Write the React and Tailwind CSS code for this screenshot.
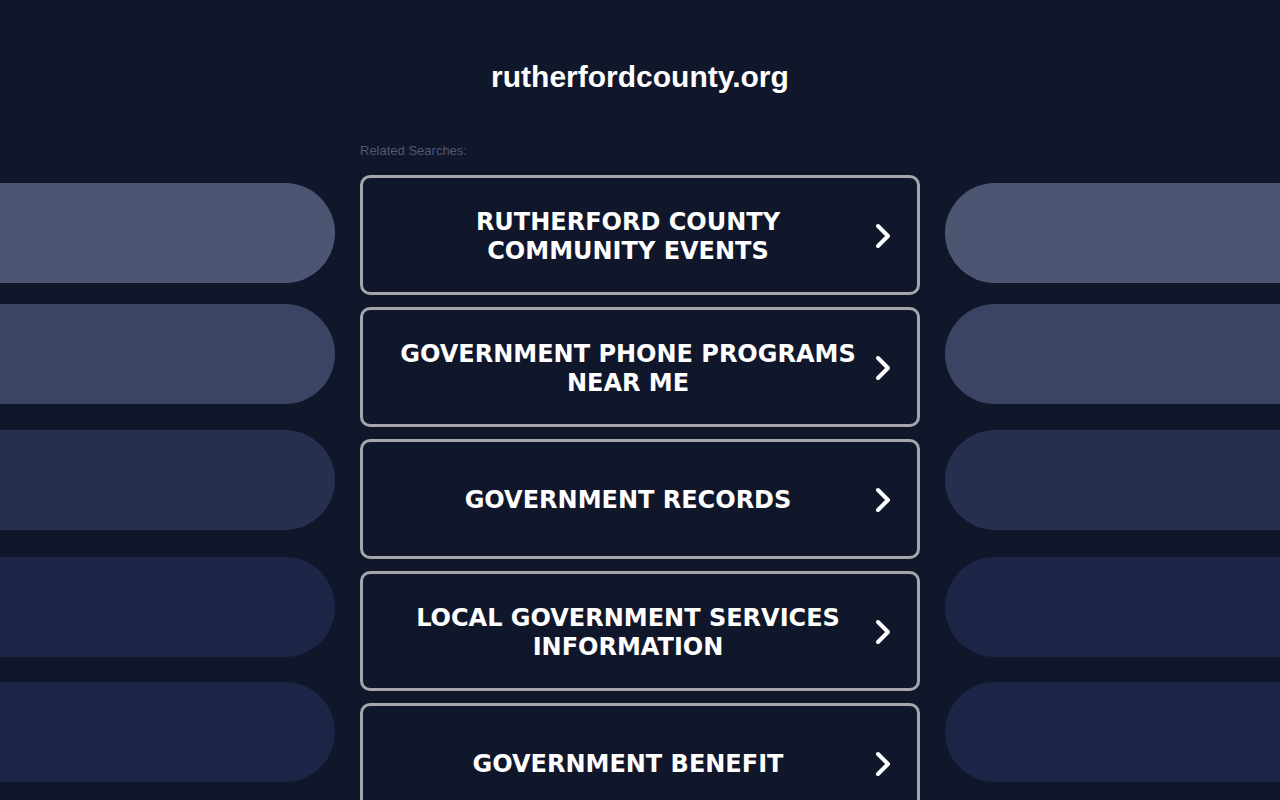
const searches = [
  ["RUTHERFORD COUNTY", "COMMUNITY EVENTS"],
  ["GOVERNMENT PHONE PROGRAMS", "NEAR ME"],
  ["GOVERNMENT RECORDS"],
  ["LOCAL GOVERNMENT SERVICES", "INFORMATION"],
  ["GOVERNMENT BENEFIT"],
];

// side pills, top to bottom
const pills = [
  "bg-[#4c5673] mt-[183px]",
  "bg-[#3b4462] mt-[21px]",
  "bg-[#272f4e] mt-[26px]",
  "bg-[#1d2647] mt-[27px]",
  "bg-[#1c2546] mt-[25px]",
];

function Chevron() {
  return (
    <svg width="20" height="28" viewBox="0 0 20 28" fill="none">
      <path d="M5 4 L15 14 L5 24" stroke="white" strokeWidth="4" strokeLinecap="round" strokeLinejoin="round" />
    </svg>
  );
}

function App() {
  return (
    <div className="h-[800px] overflow-hidden bg-[#11172b] font-['Liberation_Sans',Arial,sans-serif]">
      <div className="flex">
        <div className="w-[335px] shrink-0 flex flex-col">
          {pills.map((p, i) => (
            <div key={i} className={`h-[100px] rounded-r-[50px] ${p}`} />
          ))}
        </div>

        <div className="w-[560px] shrink-0 mx-[25px]">
          <h1 className="pt-[59px] text-center text-[30px] font-bold leading-[36px] text-white">
            rutherfordcounty.org
          </h1>
          <p className="mt-[48px] text-[13px] leading-[16px] text-[#4f5874]">Related Searches:</p>
          <div className="mt-[16px] flex flex-col gap-[12px]">
            {searches.map((lines, i) => (
              <a
                key={i}
                href="#"
                className="h-[120px] shrink-0 flex items-center rounded-[10px] border-[3px] border-[#a4a6ab] bg-[#11172b]"
              >
                <div className="flex-1 pl-[27px] pt-[3px] text-center font-['DejaVu_Sans',Verdana,sans-serif] text-[24px] font-bold leading-[29px] text-white">
                  {lines.map((l) => (
                    <div key={l}>{l}</div>
                  ))}
                </div>
                <div className="w-[51px] shrink-0 flex pl-[7px] pt-[1px]">
                  <Chevron />
                </div>
              </a>
            ))}
          </div>
        </div>

        <div className="w-[335px] shrink-0 flex flex-col">
          {pills.map((p, i) => (
            <div key={i} className={`h-[100px] rounded-l-[50px] ${p}`} />
          ))}
        </div>
      </div>
    </div>
  );
}

export default App;
